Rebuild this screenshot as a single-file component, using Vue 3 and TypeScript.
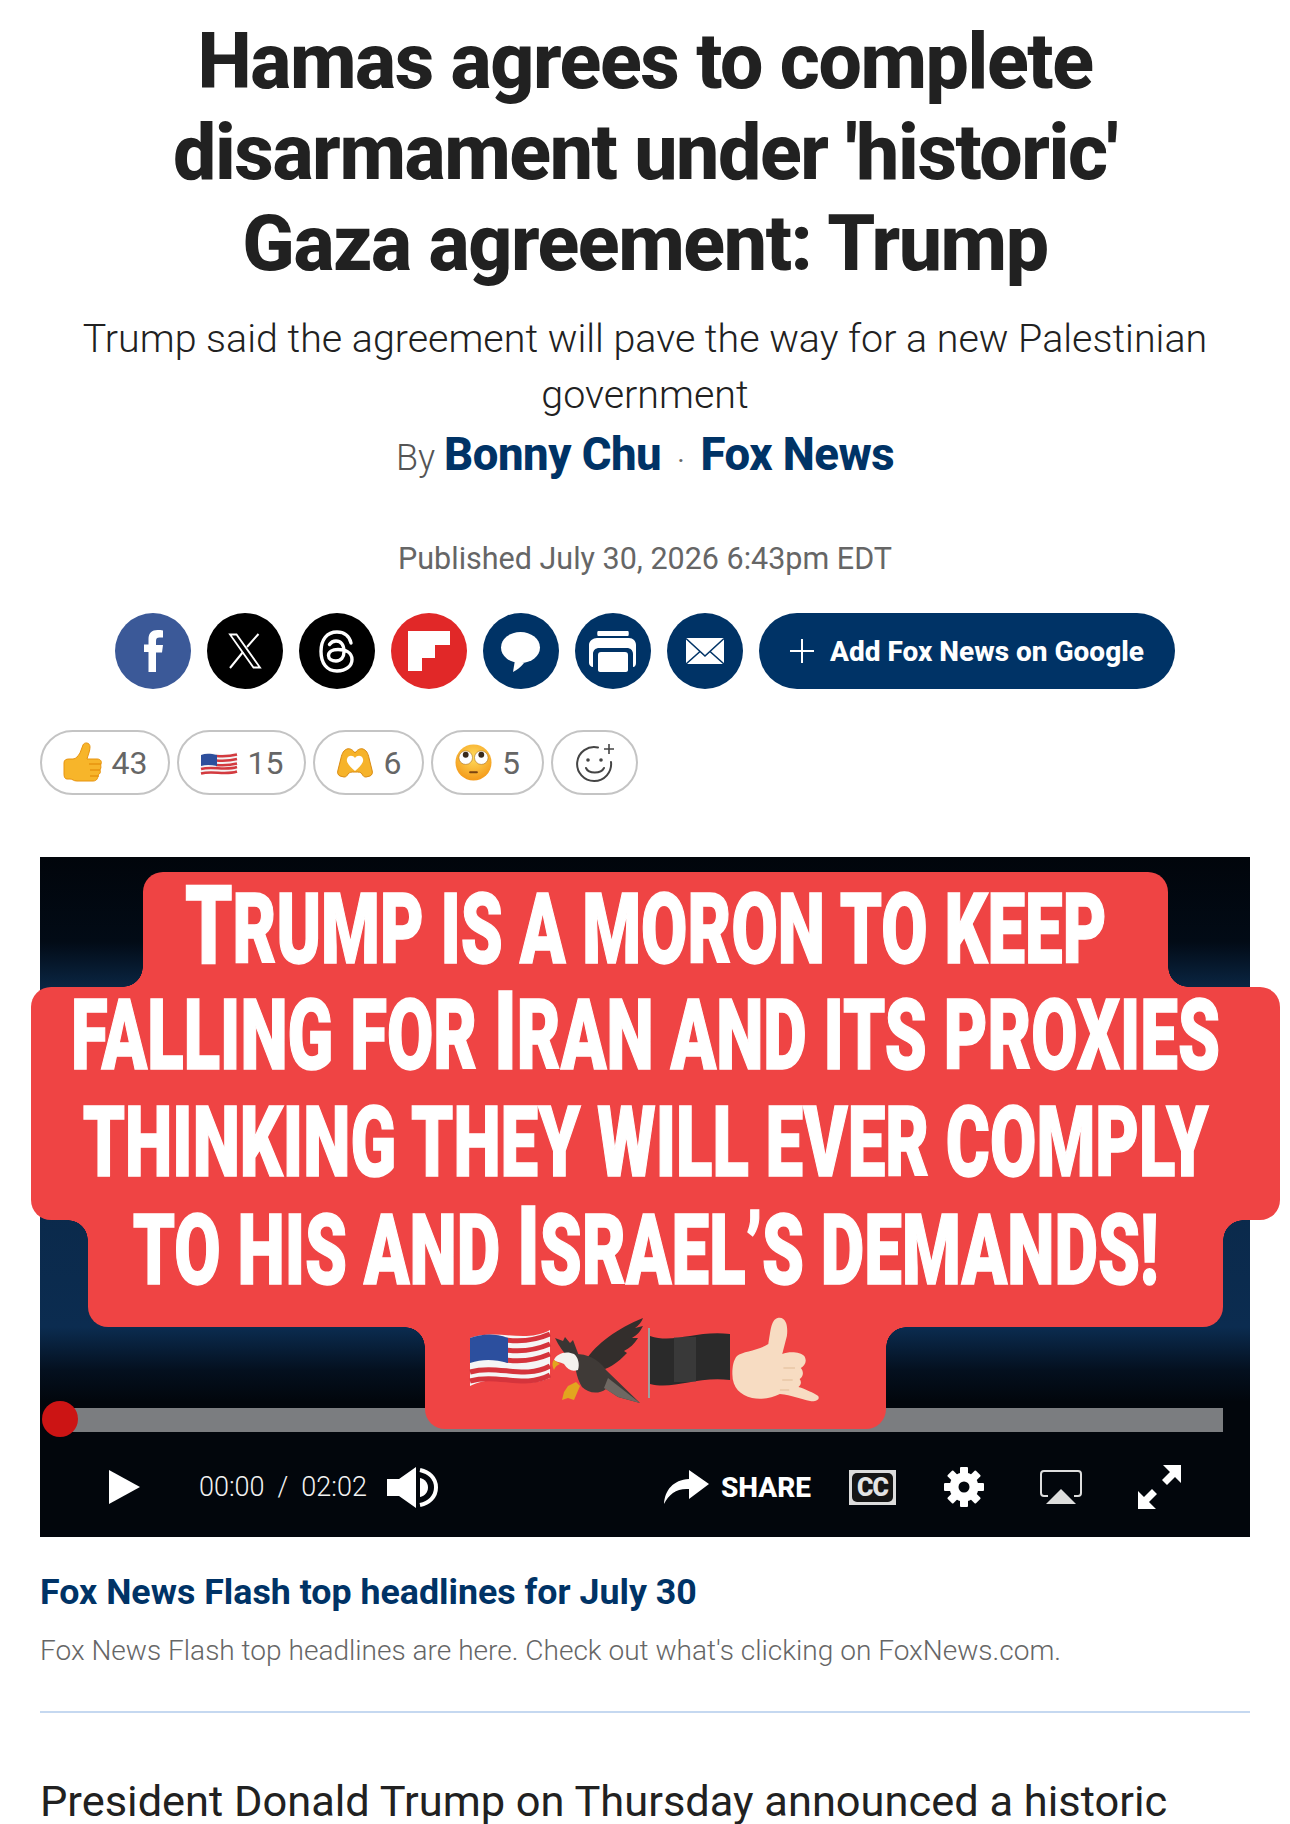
<script setup lang="ts">
const reactions = [
  { id: 'thumb', count: 43 },
  { id: 'flag', count: 15 },
  { id: 'heart', count: 6 },
  { id: 'eyes', count: 5 },
]
const bannerRows = [
  { cls: 'row-a', words: [['T', 'RUMP IS A MORON TO KEEP']] },
  { cls: 'row-b', words: [['', 'FALLING FOR '], ['I', 'RAN AND ITS PROXIES']] },
  { cls: 'row-c', words: [['', 'THINKING THEY WILL EVER COMPLY']] },
  { cls: 'row-d', words: [['', 'TO HIS AND '], ['I', 'SRAEL’S DEMANDS!']] },
]
</script>

<template>
  <div class="page">
    <header class="head">
      <h1>Hamas agrees to complete<br />disarmament under 'historic'<br />Gaza agreement: Trump</h1>
      <h2>Trump said the agreement will pave the way for a new Palestinian government</h2>
      <div class="byline">
        <span class="by">By</span>
        <a class="author">Bonny Chu</a>
        <span class="dot">·</span>
        <a class="author">Fox News</a>
      </div>
      <div class="published">Published July 30, 2026 6:43pm EDT</div>
    </header>

    <div class="share">
      <a class="circle fb">
        <svg viewBox="0 0 76 76" width="76" height="76"><path fill="#fff" d="M33.500 59V39H29v-7.500h4.500V26c0-6 3.500-9 9-9 2 0 4 .2 5.500.4v7h-3.500c-2.500 0-3.500 1-3.500 3.500v4.100h7l-1 7.500h-6V59z" /></svg>
      </a>
      <a class="circle black">
        <svg viewBox="0 0 76 76" width="76" height="76"><path fill="none" stroke="#fff" stroke-width="1.800" d="M23 21.500h6.500l23.500 33h-6.500z" /><path fill="none" stroke="#fff" stroke-width="2" d="M51.500 21 40 34M36 39 23 55" /></svg>
      </a>
      <a class="circle black">
        <svg viewBox="0 0 76 76" width="76" height="76"><path fill="none" stroke="#fff" stroke-width="3.400" stroke-linecap="round" d="M52 30c-1.500-7-7-11-14-11-10 0-16 7.500-16 19.500s6 19.500 16 19.500c9 0 15-5 15-11.500 0-7-6.500-10-14-10-6 0-9.500 2.500-9.500 6 0 3.500 3.500 5.500 7.500 5.500 5 0 8-3.500 8-9.500 0-7-3.500-10.500-8-10.500-3 0-5 1.200-6.500 3.500" /></svg>
      </a>
      <a class="circle red">
        <svg viewBox="0 0 76 76" width="76" height="76"><path fill="#fff" d="M17 18h42v14H44v13H31v13H17z" /></svg>
      </a>
      <a class="circle navy">
        <svg viewBox="0 0 76 76" width="76" height="76"><ellipse cx="37.500" cy="34.500" rx="19.500" ry="15.500" fill="#fff" /><path fill="#fff" d="M32 47l-2 12c4-2 8-5 11-9z" /></svg>
      </a>
      <a class="circle navy">
        <svg viewBox="0 0 76 76" width="76" height="76"><path fill="#fff" d="M23 18h30c1 0 1 5 0 5H23c-1 0-1-5 0-5zM22 25h32c4 0 7 3 7 7v18c0 2-1 4-3 4V41c0-4-3-6-6-6H24c-3 0-6 2-6 6v13c-2 0-4-2-4-4V32c0-4 4-7 8-7zM26 39h24c2 0 3 1 3 3v15c0 1-1 2-2 2H25c-1 0-2-1-2-2V42c0-2 1-3 3-3z" /></svg>
      </a>
      <a class="circle navy">
        <svg viewBox="0 0 76 76" width="76" height="76"><path fill="#fff" d="M19 25h38v26H19z" /><path fill="none" stroke="#003366" stroke-width="1.600" d="M19 25.500 38 43l19-17.500M19 51l14-12.500M57 51 43 38.500" /></svg>
      </a>
      <a class="google">
        <svg viewBox="0 0 28 28" width="28" height="28"><path stroke="#fff" stroke-width="2" d="M14 2v24M2 14h24" /></svg>
        <span>Add Fox News on Google</span>
      </a>
    </div>

    <div class="reactions">
      <button v-for="r in reactions" :key="r.id" class="pill" :class="'pill-' + r.id">
        <svg v-if="r.id === 'thumb'" class="emoji" viewBox="0 0 42 44" width="42" height="44">
          <path fill="#f7b52a" stroke="#e8940f" stroke-width="1" d="M1 22c0-3 2-4 5-4h4c3 0 5-3 7-6l3-8c1-3 7-3 7 2 0 4-2 8-3 12h10c4 0 5 3 4 5-1 1 1 3-1 6 1 2 0 4-2 5 0 3-1 6-5 6H14c-4 0-4-2-7-2H4c-2 0-3-2-3-5z" />
          <path fill="none" stroke="#e8940f" stroke-width="1.400" d="M26 23h12M27 29h10M27 35h9" />
        </svg>
        <svg v-else-if="r.id === 'flag'" class="emoji" viewBox="0 0 38 28" width="38" height="28">
          <path fill="#f4f4f4" d="M1 6c12-4 24 2 36-3v20c-12 5-24-1-36 3z" />
          <path fill="none" stroke="#d33a3f" stroke-width="2.600" d="M16 7c7 .6 14 .4 21-1.500M16 11.500c7 .6 14 .4 21-1.500M16 16c7 .6 14 .4 21-1.500M1 20c12-3 24 2 36-2M1 24.500c12-3 24 2 36-2" />
          <path fill="#2d4f9c" d="M1 6c5-1.800 10-1.200 16 0v11C11 15.800 6 15.500 1 17z" />
        </svg>
        <svg v-else-if="r.id === 'heart'" class="emoji" viewBox="0 0 38 30" width="38" height="30">
          <path fill="#f6b32a" stroke="#d98a10" stroke-width="1" d="M11 1c3-1 6 1 8 4 2-3 5-5 8-4 3 1 5 4 6 9l3 12c1 3 0 5-2 6l-4 1c-2 0-3-1-4-3-1-2-3-2-7-2s-5 0-7 2c-1 2-2 3-4 3l-4-1c-2-1-3-3-2-6l3-12c1-5 3-8 6-9z" />
          <path fill="#fff" d="M19 10c2-3 7-3 8 1 1 3-3 8-8 12-5-4-9-9-8-12 1-4 6-4 8-1z" />
        </svg>
        <svg v-else class="emoji" viewBox="0 0 38 38" width="37" height="37">
          <defs><radialGradient id="face" cx="50%" cy="35%" r="65%"><stop offset="0" stop-color="#ffdc5c" /><stop offset="1" stop-color="#f49a1a" /></radialGradient></defs>
          <circle cx="19" cy="19" r="18.500" fill="url(#face)" />
          <circle cx="11" cy="14" r="7" fill="#fff" stroke="#a86a12" stroke-width=".6" /><circle cx="27" cy="14" r="7" fill="#fff" stroke="#a86a12" stroke-width=".6" />
          <circle cx="11" cy="11" r="3" fill="#3a2a1c" /><circle cx="27" cy="11" r="3" fill="#3a2a1c" />
          <path stroke="#7a4310" stroke-width="2" stroke-linecap="round" d="M15.500 29h7" />
        </svg>
        <span>{{ r.count }}</span>
      </button>
      <button class="pill add">
        <svg viewBox="0 0 42 42" width="42" height="42" fill="none" stroke="#444" stroke-width="2">
          <path stroke-linecap="round" d="M24 5.500A17 17 0 1 0 37 20" />
          <circle cx="14" cy="18" r="1.800" fill="#444" stroke="none" /><circle cx="27" cy="18" r="1.800" fill="#444" stroke="none" />
          <path stroke-linecap="round" d="M12 26c2.500 6 15 6 18 0" />
          <path d="M35 2v10M30 7h10" stroke-width="1.600" />
        </svg>
      </button>
    </div>

    <figure class="video">
      <div class="screen">
        <div class="glow"></div>
        <div class="progress"></div>
        <div class="knob"></div>
        <div class="banner">
          <div v-for="row in bannerRows" :key="row.cls" class="row" :class="row.cls">
            <span class="squeeze">
              <template v-for="(w, i) in row.words" :key="i"><span class="cap">{{ w[0] }}</span>{{ w[1] }}</template>
            </span>
          </div>
          <div class="row row-e">
            <svg viewBox="0 0 360 90" width="360" height="90">
              <!-- flag -->
              <path fill="#f5f5f5" d="M2 24c28-10 54 6 80-8v48c-26 12-52-6-80 8z" />
              <path fill="none" stroke="#d5343c" stroke-width="5" d="M38 26c15 2 30 0 44-6M38 36c15 2 30 0 44-6M38 46c15 2 30 0 44-6M2 58c28-8 54 8 80-6M2 67c28-8 54 8 80-6" />
              <path fill="#2c4f9e" d="M2 24c12-4 24-5 38 0v25c-14-4-26-4-38 0z" />
              <!-- eagle -->
              <path fill="#3a3533" d="M87 24l8 3 2-4 5 6 3-3 6 16-10 2c-6-6-10-12-14-20z" />
              <path fill="#332e2c" d="M118 46C128 30 150 14 175 4c-2 5-4 7-8 10l8-2c-3 6-6 9-11 12h6c-4 6-8 10-14 13l3 2c-6 6-12 12-22 16z" />
              <path fill="#3f3a37" d="M108 40c10 0 22 4 30 16l34 33-22-6-12-8c-8 6-18 4-24-2-6-10-8-22-6-33z" />
              <path fill="#6e6862" d="M140 64l32 25-22-6-14-9z" />
              <path fill="#f4f2ee" d="M86 46c2-6 12-10 20-6 4 3 6 10 4 16-6 2-10 0-14-6-4-2-8-2-10-4z" />
              <path fill="#e2a51f" d="M86 46c-2 2-2 6 0 10 1-3 3-5 6-6zM100 72l8-4 4 4-6 14-6-2-6 2 2-8z" />
              <!-- black flag -->
              <path fill="#a0a0a0" d="M180 14h2v70h-2z" />
              <path fill="#2a2a2a" d="M182 22c24 8 46-6 80-2v46c-34-4-56 10-80 4z" />
              <path fill="#484848" opacity=".5" d="M206 23h22v45h-22z" />
              <!-- hand -->
              <g transform="translate(269 3) scale(1.16 1) translate(-272 -3)">
                <path fill="#f7dcc2" d="M272 42c5-5 18-5 27-12 2-12 2-24 8-26 8-2 9 10 8 18l-4 18c6-3 16-2 19 2 3 6 0 10-3 12 3 4 2 9-1 11 2 3 1 6-1 8 6 2 13 6 17 9 2 4-3 6-7 5-8-2-16-6-26-7-7 4-16 6-24 4-10-3-17-10-17-24 0-8 1-14 4-18z" />
                <path fill="none" stroke="#e9c6a6" stroke-width="1.500" d="M312 54h10M311 66h9M309 76h8" />
              </g>
            </svg>
          </div>
        </div>
        <div class="controls">
          <svg class="ctl play" viewBox="0 0 31 34" width="31" height="34"><path fill="#fff" d="M0 0l31 17L0 34z" /></svg>
          <span class="time">00:00<i>/</i>02:02</span>
          <svg class="ctl vol" viewBox="0 0 52 41" width="52" height="41">
            <path fill="#fff" d="M0 12h12L29 0v41L12 29H0z" />
            <path fill="none" stroke="#fff" stroke-width="4" d="M33 3c9 2 16 8 16 17.500S42 36 33 38" />
            <path fill="#fff" d="M33 11c5 1 8 5 8 9.500S38 29 33 30z" />
          </svg>
          <span class="spacer"></span>
          <svg class="ctl" viewBox="0 0 45 34" width="45" height="34"><path fill="#fff" d="M0 34C1 20 9 10 25 9V0l20 14-20 15V19C13 18 5 24 0 34z" /></svg>
          <span class="share-label">SHARE</span>
          <span class="cc"><span>CC</span></span>
          <svg class="ctl gear" viewBox="0 0 40 40" width="40" height="40">
            <g fill="#fff"><circle cx="20" cy="20" r="14.500" /><rect x="16" y="0" width="8" height="40" rx="1" /><rect x="0" y="16" width="40" height="8" rx="1" /><rect x="16" y="0" width="8" height="40" rx="1" transform="rotate(45 20 20)" /><rect x="16" y="0" width="8" height="40" rx="1" transform="rotate(-45 20 20)" /></g>
            <circle cx="20" cy="20" r="5.500" fill="#02060c" />
          </svg>
          <svg class="ctl air" viewBox="0 0 42 34" width="42" height="34">
            <path fill="none" stroke="#ddd" stroke-width="2" d="M8 26H4c-2 0-3-1-3-3V4c0-2 1-3 3-3h34c2 0 3 1 3 3v19c0 2-1 3-3 3h-4" />
            <path fill="#ddd" d="M21 19l15 15H6z" />
          </svg>
          <svg class="ctl full" viewBox="0 0 43 44" width="43" height="44">
            <path fill="#fff" d="M25 0h18v18l-6-6-8 8-5-5 8-8zM0 26l6 6 8-8 5 5-8 8 7 7H0z" />
          </svg>
        </div>
      </div>
      <figcaption>
        <h3>Fox News Flash top headlines for July 30</h3>
        <p>Fox News Flash top headlines are here. Check out what's clicking on FoxNews.com.</p>
      </figcaption>
    </figure>

    <p class="body">President Donald Trump on Thursday announced a historic</p>
  </div>
</template>

<style scoped>
.page {
  height: 1824px;
  overflow: hidden;
  background: #fff;
  padding: 0 40px;
  box-sizing: border-box;
  font-family: Roboto, "Liberation Sans", sans-serif;
  color: #212121;
}

.head {
  text-align: center;
}

h1 {
  margin: 0;
  padding-top: 17px;
  font-size: 77px;
  line-height: 91px;
  font-weight: 800;
  letter-spacing: -1.4px;
}

h2 {
  margin: 21px 0 0;
  font-size: 39.4px;
  line-height: 56px;
  font-weight: 300;
}

.byline {
  display: flex;
  justify-content: center;
  align-items: baseline;
  margin-top: 5px;
  height: 56px;
}

.by {
  font-size: 36px;
  font-weight: 300;
  color: #555;
  margin-right: 9px;
}

.author {
  font-size: 45.500px;
  font-weight: 800;
  color: #003366;
  letter-spacing: -0.5px;
}

.dot {
  font-size: 28px;
  color: #666;
  margin: 0 16px;
}

.published {
  margin-top: 55px;
  font-size: 30.500px;
  line-height: 40px;
  color: #666;
}

.share {
  display: flex;
  justify-content: center;
  gap: 16px;
  margin-top: 34px;
}

.circle {
  width: 76px;
  height: 76px;
  border-radius: 50%;
  flex: none;
}

.fb { background: #3b5998; }
.black { background: #000; }
.red { background: #e12828; }
.navy { background: #003366; }

.google {
  display: flex;
  align-items: center;
  gap: 14px;
  height: 76px;
  padding: 0 31px 0 29px;
  border-radius: 38px;
  background: #003366;
  color: #fff;
  font-size: 28px;
  font-weight: 800;
}

.reactions {
  display: flex;
  gap: 7px;
  margin-top: 41px;
}

.pill {
  display: flex;
  align-items: center;
  justify-content: center;
  gap: 7px;
  height: 65px;
  padding: 0;
  border: 2px solid #c4c4c4;
  border-radius: 33px;
  background: #fff;
  font: 400 32px Roboto, sans-serif;
  color: #666;
}

.pill-thumb { width: 130px; }
.pill-flag { width: 129px; gap: 10px; }
.pill-heart { width: 111px; gap: 10px; }
.pill-eyes { width: 113px; gap: 10px; }
.pill.add { width: 87px; }

.video {
  margin: 62px 0 0;
}

.screen {
  position: relative;
  height: 680px;
  background: #02060c;
}

.glow {
  position: absolute;
  left: 0;
  right: 0;
  top: 0;
  height: 550px;
  background: linear-gradient(180deg, #01050b 0, #020b16 85px, #0a2542 130px, #0b2c50 470px, #04101f 513px, #02060c 545px);
}

.progress {
  position: absolute;
  left: 20px;
  right: 27px;
  top: 551px;
  height: 24px;
  background: #7b7d80;
}

.knob {
  position: absolute;
  left: 2px;
  top: 544px;
  width: 36px;
  height: 36px;
  border-radius: 50%;
  background: #cc1414;
}

.banner {
  position: absolute;
  left: -9px;
  top: 15px;
  width: 1249px;
  display: flex;
  flex-direction: column;
  align-items: center;
}

.row {
  position: relative;
  background: #ef4444;
  display: flex;
  align-items: center;
  justify-content: center;
  box-sizing: border-box;
  white-space: nowrap;
  color: #fff;
  font-weight: 900;
  padding-right: 20px;
}

.squeeze {
  display: inline-block;
  font-size: 98px;
  line-height: 1;
  transform: scaleX(0.686);
  -webkit-text-stroke: 1.5px #fff;
}

.cap {
  font-size: 110px;
  line-height: 0;
}

.row-a {
  width: 1025px;
  height: 115px;
  border-radius: 20px 20px 0 0;
}

.row-b {
  width: 1249px;
  height: 98px;
  border-radius: 20px 20px 0 0;
}

.row-c {
  width: 1249px;
  height: 135px;
  padding-bottom: 19px;
  border-radius: 0 0 20px 20px;
}

.row-d {
  width: 1135px;
  height: 128px;
  margin-top: -21px;
  padding-bottom: 24px;
  border-radius: 0 0 20px 20px;
}

.row-e {
  width: 461px;
  height: 102px;
  padding-right: 16px;
  border-radius: 0 0 20px 20px;
  align-items: flex-start;
}

.row-e svg {
  flex: none;
  margin-top: -13px;
  position: relative;
}

/* concave fillets where the banner steps in and out */
.row-a::before,
.row-a::after,
.row-d::before,
.row-d::after,
.row-e::before,
.row-e::after {
  content: '';
  position: absolute;
  width: 20px;
  height: 20px;
}

.row-a::before,
.row-d::before,
.row-e::before {
  left: -20px;
}

.row-a::after,
.row-d::after,
.row-e::after {
  right: -20px;
}

.row-a::before,
.row-a::after {
  bottom: 0;
}

.row-a::before {
  background: radial-gradient(circle at 0 0, transparent 19.500px, #ef4444 20px);
}

.row-a::after {
  background: radial-gradient(circle at 100% 0, transparent 19.500px, #ef4444 20px);
}

.row-d::before,
.row-d::after {
  top: 21px;
}

.row-e::before,
.row-e::after {
  top: 0;
}

.row-d::before,
.row-e::before {
  background: radial-gradient(circle at 0 100%, transparent 19.500px, #ef4444 20px);
}

.row-d::after,
.row-e::after {
  background: radial-gradient(circle at 100% 100%, transparent 19.500px, #ef4444 20px);
}

.controls {
  position: absolute;
  left: 0;
  right: 0;
  bottom: 28px;
  height: 44px;
  padding: 0 69px;
  display: flex;
  align-items: center;
  color: #fff;
}

.ctl {
  flex: none;
}

.time {
  margin-left: 59px;
  font-size: 27px;
  font-weight: 300;
  color: #f2f2f2;
  width: 166px;
  white-space: nowrap;
}

.time i {
  font-style: normal;
  margin: 0 13px;
}

.vol {
  margin-left: 22px;
}

.spacer {
  flex: 1;
}

.share-label {
  margin-left: 12px;
  font-size: 28px;
  font-weight: 800;
}

.cc {
  margin-left: 38px;
  width: 47px;
  height: 35px;
  box-sizing: border-box;
  padding: 3px;
  background: #dcdcdc;
  display: flex;
}

.cc span {
  flex: 1;
  background: #151515;
  border-radius: 5px;
  color: #e4e4e4;
  font-size: 25px;
  font-weight: 900;
  line-height: 29px;
  text-align: center;
  letter-spacing: -1px;
}

.gear {
  margin-left: 48px;
}

.air {
  margin-left: 56px;
}

.full {
  margin-left: 56px;
}

figcaption {
  padding-bottom: 42px;
  border-bottom: 2px solid #c5d8f0;
}

h3 {
  margin: 34px 0 0;
  font-size: 35.750px;
  line-height: 42px;
  font-weight: 700;
  color: #003366;
}

figcaption p {
  margin: 20px 0 0;
  font-size: 28.050px;
  line-height: 36px;
  font-weight: 300;
  color: #666;
}

.body {
  margin: 61px 0 0;
  font-size: 43.400px;
  line-height: 56px;
  font-weight: 400;
  white-space: nowrap;
}
</style>
